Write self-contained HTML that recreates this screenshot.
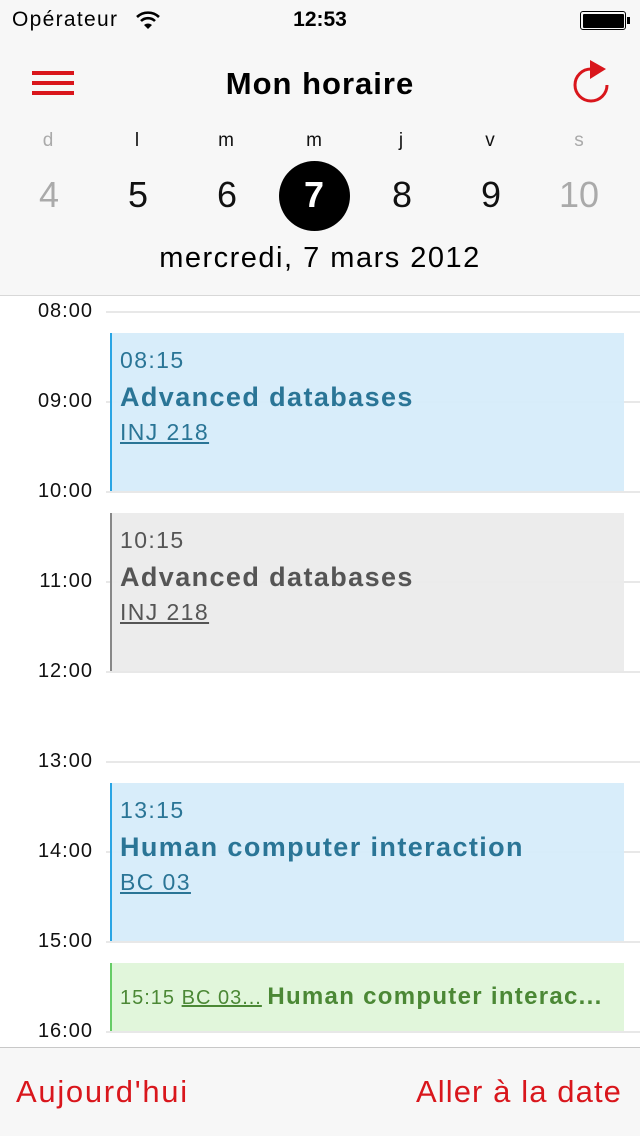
<!DOCTYPE html>
<html><head><meta charset="utf-8"><style>
*{margin:0;padding:0;box-sizing:border-box}
body{width:640px;height:1136px;position:relative;overflow:hidden;background:#fff;font-family:"Liberation Sans",sans-serif}
.a{position:absolute}
.hdr{left:0;top:0;width:640px;height:296px;background:#f7f7f7;border-bottom:1px solid #d8d8d8}
.dl{top:130px;width:40px;text-align:center;font-size:19px;color:#111}
.dn{top:174px;width:60px;text-align:center;font-size:36px;color:#111}
.g{color:#aaa}
.tl{left:0;width:93px;text-align:right;font-size:20px;color:#111;letter-spacing:1px}
.ln{left:106px;right:0;height:2px;background:#e8e8e8}
.ev{left:110px;width:514px;padding-left:8px;letter-spacing:1.4px}
.bot{left:0;top:1047px;width:640px;height:89px;background:#f7f7f7;border-top:1px solid #c8c8c8}
</style></head><body>
<div class="a hdr"></div>
<div class="a" style="left:12px;top:8px;font-size:21px;color:#000;letter-spacing:1.3px">Opérateur</div>
<svg class="a" style="left:135px;top:10px" width="26" height="20" viewBox="0 0 26 20"><path d="M2 7a16 16 0 0 1 22 0" stroke="#000" stroke-width="2.6" fill="none"/><path d="M6 11a10 10 0 0 1 14 0" stroke="#000" stroke-width="2.6" fill="none"/><path d="M13 19l-4-4a6 6 0 0 1 8 0z" fill="#000"/></svg>
<div class="a" style="left:0;width:640px;top:8px;text-align:center;font-size:21px;font-weight:bold">12:53</div>
<div class="a" style="left:580px;top:11px;width:46px;height:19px;border:1.5px solid #000;border-radius:3px;padding:1.5px"><div style="width:100%;height:100%;background:#000;border-radius:1px"></div></div>
<div class="a" style="left:627px;top:17px;width:3px;height:7px;background:#000"></div>
<div class="a" style="left:32px;top:71px;width:42px;height:4px;background:#d9161c"></div>
<div class="a" style="left:32px;top:81px;width:42px;height:4px;background:#d9161c"></div>
<div class="a" style="left:32px;top:91px;width:42px;height:4px;background:#d9161c"></div>
<div class="a" style="left:0;width:640px;top:66px;text-align:center;font-size:31px;font-weight:bold;color:#000;letter-spacing:1px">Mon horaire</div>
<svg class="a" style="left:560px;top:55px" width="60" height="55" viewBox="560 55 60 55"><path d="M607 85A16 16 0 1 1 591 69" stroke="#d9161c" stroke-width="3" fill="none"/><path d="M590 60L606 69L590 79z" fill="#d9161c"/></svg>
<div class="a dl g" style="left:28px">d</div>
<div class="a dl" style="left:117px">l</div>
<div class="a dl" style="left:206px">m</div>
<div class="a dl" style="left:294px">m</div>
<div class="a dl" style="left:381px">j</div>
<div class="a dl" style="left:470px">v</div>
<div class="a dl g" style="left:559px">s</div>
<div class="a" style="left:279px;top:161px;width:71px;height:70px;border-radius:50%;background:#000"></div>
<div class="a dn g" style="left:19px">4</div>
<div class="a dn" style="left:108px">5</div>
<div class="a dn" style="left:197px">6</div>
<div class="a dn" style="left:284px;color:#fff;font-weight:bold">7</div>
<div class="a dn" style="left:372px">8</div>
<div class="a dn" style="left:461px">9</div>
<div class="a dn g" style="left:549px">10</div>
<div class="a" style="left:0;width:640px;top:242px;text-align:center;font-size:29px;color:#000;letter-spacing:1.5px">mercredi, 7 mars 2012</div>

<div class="a ln" style="top:311px"></div><div class="a tl" style="top:300px">08:00</div>
<div class="a ln" style="top:401px"></div><div class="a tl" style="top:390px">09:00</div>
<div class="a ln" style="top:491px"></div><div class="a tl" style="top:480px">10:00</div>
<div class="a ln" style="top:581px"></div><div class="a tl" style="top:570px">11:00</div>
<div class="a ln" style="top:671px"></div><div class="a tl" style="top:660px">12:00</div>
<div class="a ln" style="top:761px"></div><div class="a tl" style="top:750px">13:00</div>
<div class="a ln" style="top:851px"></div><div class="a tl" style="top:840px">14:00</div>
<div class="a ln" style="top:941px"></div><div class="a tl" style="top:930px">15:00</div>
<div class="a ln" style="top:1031px"></div><div class="a tl" style="top:1020px">16:00</div>

<div class="a ev" style="top:333px;height:158px;background:rgba(213,236,250,.92);border-left:2px solid #2aa5e4;color:#2a7596">
<div style="margin-top:14px;font-size:23px">08:15</div>
<div style="margin-top:8px;font-size:27px;font-weight:bold">Advanced databases</div>
<div style="margin-top:6px;font-size:23px;text-decoration:underline">INJ 218</div></div>
<div class="a ev" style="top:513px;height:158px;background:rgba(235,235,235,.95);border-left:2px solid #888;color:#555">
<div style="margin-top:14px;font-size:23px">10:15</div>
<div style="margin-top:8px;font-size:27px;font-weight:bold">Advanced databases</div>
<div style="margin-top:6px;font-size:23px;text-decoration:underline">INJ 218</div></div>
<div class="a ev" style="top:783px;height:158px;background:rgba(213,236,250,.92);border-left:2px solid #2aa5e4;color:#2a7596">
<div style="margin-top:14px;font-size:23px">13:15</div>
<div style="margin-top:8px;font-size:27px;font-weight:bold">Human computer interaction</div>
<div style="margin-top:6px;font-size:23px;text-decoration:underline">BC 03</div></div>
<div class="a ev" style="top:963px;height:68px;background:rgba(223,245,217,.95);border-left:2px solid #6c6;color:#4b8835;white-space:nowrap;letter-spacing:1px">
<div style="margin-top:20px"><span style="font-size:20px">15:15 <u>BC 03...</u></span> <span style="font-size:24px;font-weight:bold;letter-spacing:1.3px">Human computer interac...</span></div></div>

<div class="a bot"></div>
<div class="a" style="left:16px;top:1074px;font-size:31px;color:#d9161c;letter-spacing:1.7px">Aujourd'hui</div>
<div class="a" style="right:18px;top:1074px;font-size:31px;color:#d9161c;letter-spacing:1.1px">Aller à la date</div>
</body></html>
